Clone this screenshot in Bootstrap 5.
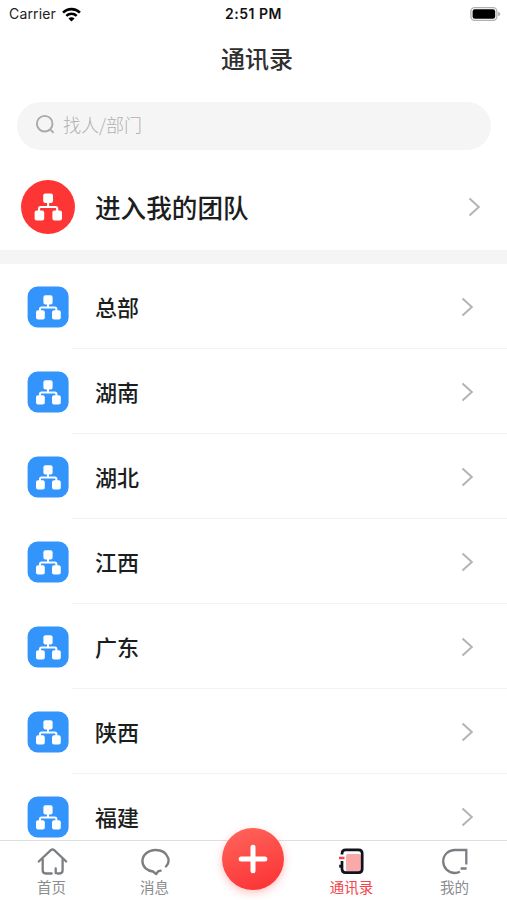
<!DOCTYPE html>
<html lang="zh-CN">
<head>
<meta charset="utf-8">
<meta name="viewport" content="width=device-width, initial-scale=1">
<title>通讯录</title>
<link href="https://cdn.jsdelivr.net/npm/bootstrap@5.3.0/dist/css/bootstrap.min.css" rel="stylesheet">
<style>
  body { font-family: "Inter", "Noto Sans CJK SC", sans-serif; color: #1c1e1e; background: #fff; }
  svg { display: block; flex: none; }
  .phone { height: 900px; }
  .status { height: 28px; font-size: 14px; line-height: 28px; padding: 0 6px 0 9px; color: #222; }
  .carrier { letter-spacing: .15px; }
  .wifi { margin-left: 6px; }
  .clock { font-weight: 600; color: #111; letter-spacing: .5px; margin-right: 3px; }
  .cjk { font-family: "Noto Sans CJK SC", sans-serif; }
  .page-title { height: 60px; line-height: 60px; font-size: 24px; font-weight: 500; color: #303030; margin: 0; padding-left: 7px; }
  .search { height: 48px; margin: 14px 16px 0 17px; padding: 0 0 3px 18px; background: #f5f5f5; color: #b0b0b0; font-size: 18px; font-weight: 300; gap: 7px; }
  .team { height: 86px; margin-top: 14px; padding: 0 26px 0 21px; font-size: 25.6px; font-weight: 500; }
  .team-name { padding-left: 20px; }
  .band { height: 14px; background: #f5f5f5; }
  .depts { min-height: 0; }
  .dept { height: 85px; padding-left: 27px; font-size: 22px; font-weight: 500; }
  .dept-body { margin-left: 3px; padding: 1px 33px 0 23px; border-bottom: 1px solid #f3f3f3; }
  .tabs { height: 60px; border-top: 1px solid #dedede; background: #fff; font-size: 14.5px; line-height: 20px; color: #8a8d8f; }
  .tab { width: 103px; padding-top: 6px; }
  .tab.on { color: #f4434a; }
  .tab-mid { width: 94px; }
  .plus { width: 62px; height: 62px; margin-top: -13px; background: linear-gradient(160deg, #ff665c, #fb3033); box-shadow: 0 3px 9px rgba(255, 70, 60, .32); }
</style>
</head>
<body>
<svg width="0" height="0" class="position-absolute">
  <symbol id="chev" viewBox="0 0 13 20"><path d="M1.500 1.500 10.800 10 1.500 18.500" fill="none" stroke="#b4b4b4" stroke-width="2"/></symbol>
  <symbol id="org" viewBox="0 0 42 42">
    <rect x=".6" y=".5" width="41" height="41" rx="10" fill="#3394fb"/>
    <g fill="#fff"><rect x="16.400" y="9.300" width="9.200" height="9.200" rx="2"/><rect x="9" y="24.200" width="8.800" height="9.200" rx="2"/><rect x="25" y="24.200" width="8.800" height="9.200" rx="2"/></g>
    <path d="M21 17v4.600M13 25v-1.900q0-1.600 1.600-1.600h13.200q1.600 0 1.600 1.600V25" fill="none" stroke="#fff" stroke-width="2"/>
  </symbol>
</svg>
<div class="phone d-flex flex-column overflow-hidden">
  <div class="status d-flex align-items-center flex-shrink-0">
    <div class="d-flex align-items-center col">
      <span class="carrier">Carrier</span>
      <svg class="wifi" width="19" height="15" viewBox="0 0 18 14"><g fill="none" stroke="#000" stroke-width="2.400"><path d="M1 5.200a11.400 11.400 0 0 1 16 0"/><path d="M4.100 8.300a7 7 0 0 1 9.800 0"/></g><path d="M9 13.700 6.100 10.800a4.100 4.100 0 0 1 5.800 0z"/></svg>
    </div>
    <div class="clock">2:51 PM</div>
    <div class="col d-flex justify-content-end">
      <svg width="31" height="15" viewBox="0 0 31 15"><rect x=".9" y=".6" width="26" height="12.800" rx="3.800" fill="#fff" stroke="#b0b0b0" stroke-width="1.300"/><rect x="2.600" y="2.300" width="22.600" height="9.400" rx="2.300"/><path d="M28.200 4.700q2.100.7 2.100 2.300t-2.100 2.300z" fill="#aaa"/></svg>
    </div>
  </div>
  <h1 class="page-title cjk text-center flex-shrink-0">通讯录</h1>
  <div class="search cjk rounded-pill d-flex align-items-center flex-shrink-0">
    <svg width="21" height="21" viewBox="0 0 21 21" fill="none" stroke="#aaa" stroke-width="1.900"><circle cx="9.700" cy="9.700" r="7.800"/><path d="m15 15.200 3.600 3.600"/></svg>
    <span>找人/部门</span>
  </div>
  <div class="team cjk d-flex align-items-center flex-shrink-0">
    <svg width="54" height="54" viewBox="0 0 54 54"><circle cx="27" cy="27" r="27" fill="#fe3535"/><g fill="#fff"><rect x="22.200" y="13.400" width="9.800" height="9.600" rx="2"/><rect x="13.600" y="30.600" width="9.600" height="10" rx="2"/><rect x="31.400" y="30.600" width="9.600" height="10" rx="2"/></g><path d="M27.100 22v5M18 31v-2.200q0-1.800 1.800-1.800h14.600q1.800 0 1.800 1.800V31" fill="none" stroke="#fff" stroke-width="2.100"/></svg>
    <span class="team-name flex-grow-1">进入我的团队</span>
    <svg width="13" height="20"><use href="#chev"/></svg>
  </div>
  <div class="band flex-shrink-0"></div>
  <div class="depts cjk flex-grow-1 overflow-hidden">
    <div class="dept d-flex align-items-center"><svg width="42" height="42"><use href="#org"/></svg><div class="dept-body d-flex align-items-center justify-content-between flex-grow-1 h-100"><span>总部</span><svg width="13" height="20"><use href="#chev"/></svg></div></div>
    <div class="dept d-flex align-items-center"><svg width="42" height="42"><use href="#org"/></svg><div class="dept-body d-flex align-items-center justify-content-between flex-grow-1 h-100"><span>湖南</span><svg width="13" height="20"><use href="#chev"/></svg></div></div>
    <div class="dept d-flex align-items-center"><svg width="42" height="42"><use href="#org"/></svg><div class="dept-body d-flex align-items-center justify-content-between flex-grow-1 h-100"><span>湖北</span><svg width="13" height="20"><use href="#chev"/></svg></div></div>
    <div class="dept d-flex align-items-center"><svg width="42" height="42"><use href="#org"/></svg><div class="dept-body d-flex align-items-center justify-content-between flex-grow-1 h-100"><span>江西</span><svg width="13" height="20"><use href="#chev"/></svg></div></div>
    <div class="dept d-flex align-items-center"><svg width="42" height="42"><use href="#org"/></svg><div class="dept-body d-flex align-items-center justify-content-between flex-grow-1 h-100"><span>广东</span><svg width="13" height="20"><use href="#chev"/></svg></div></div>
    <div class="dept d-flex align-items-center"><svg width="42" height="42"><use href="#org"/></svg><div class="dept-body d-flex align-items-center justify-content-between flex-grow-1 h-100"><span>陕西</span><svg width="13" height="20"><use href="#chev"/></svg></div></div>
    <div class="dept d-flex align-items-center"><svg width="42" height="42"><use href="#org"/></svg><div class="dept-body d-flex align-items-center justify-content-between flex-grow-1 h-100"><span>福建</span><svg width="13" height="20"><use href="#chev"/></svg></div></div>
  </div>
  <nav class="tabs cjk d-flex flex-shrink-0">
    <div class="tab d-flex flex-column align-items-center">
      <svg width="32" height="30" viewBox="0 0 32 30" fill="none" stroke="#7b7f82" stroke-width="2.300" stroke-linecap="round" stroke-linejoin="round"><path d="M2.800 14.500 14.800 3.200q1.700-1.500 3.400 0l12 11.300"/><path d="M6.700 12.500v10.800q0 3.200 3 3.200h6M26.600 12.500v10.800q0 3.200-3 3.200h-2.300M19.700 21.500v4.500"/></svg>
      <span>首页</span>
    </div>
    <div class="tab d-flex flex-column align-items-center">
      <svg width="32" height="30" viewBox="0 0 32 30" fill="none" stroke="#7b7f82" stroke-width="2.400" stroke-linecap="round" stroke-linejoin="round"><path d="M27 19.500C29.800 16.600 30 13.300 29 10.600 27.200 5.900 22.600 3 16.600 3 9.200 3 3.400 8 3.400 14c0 5.600 4.400 9.700 10.600 10.500l3.200 2.600 1.800-2.700 2.600-.7"/></svg>
      <span>消息</span>
    </div>
    <div class="tab-mid d-flex justify-content-center">
      <div class="plus rounded-circle d-flex align-items-center justify-content-center"><svg width="30" height="30" viewBox="0 0 30 30" stroke="#fff" stroke-width="5" stroke-linecap="round"><path d="M3.200 15h23.600M15 3.200v23.600"/></svg></div>
    </div>
    <div class="tab on d-flex flex-column align-items-center">
      <svg width="32" height="30" viewBox="0 0 32 30" fill="none"><rect x="10" y="7" width="15" height="17.500" rx="1.500" fill="#faa9a9"/><path d="M6 7.500V6.500q0-3.700 3.700-3.700h12.800q3.700 0 3.700 3.700v15.500q0 3.700-3.700 3.700H9.700Q6 25.700 6 22V14" stroke="#11111f" stroke-width="2.700"/><path d="M3 11h5.500" stroke="#f4434a" stroke-width="2.500"/><path d="M3.200 19.200h3" stroke="#11111f" stroke-width="2.900"/></svg>
      <span>通讯录</span>
    </div>
    <div class="tab d-flex flex-column align-items-center">
      <svg width="32" height="30" viewBox="0 0 32 30" fill="none" stroke="#7b7f82" stroke-width="2.300"><path d="M21 24.800a12 12 0 0 1-5.200 1.200A11.500 11.500 0 0 1 4.200 14.500C4.200 7.800 9.400 3 15.800 3h11.500v14.500M27.600 21.500h-6"/></svg>
      <span>我的</span>
    </div>
  </nav>
</div>
<script src="https://cdn.jsdelivr.net/npm/bootstrap@5.3.0/dist/js/bootstrap.bundle.min.js"></script>
</body>
</html>
